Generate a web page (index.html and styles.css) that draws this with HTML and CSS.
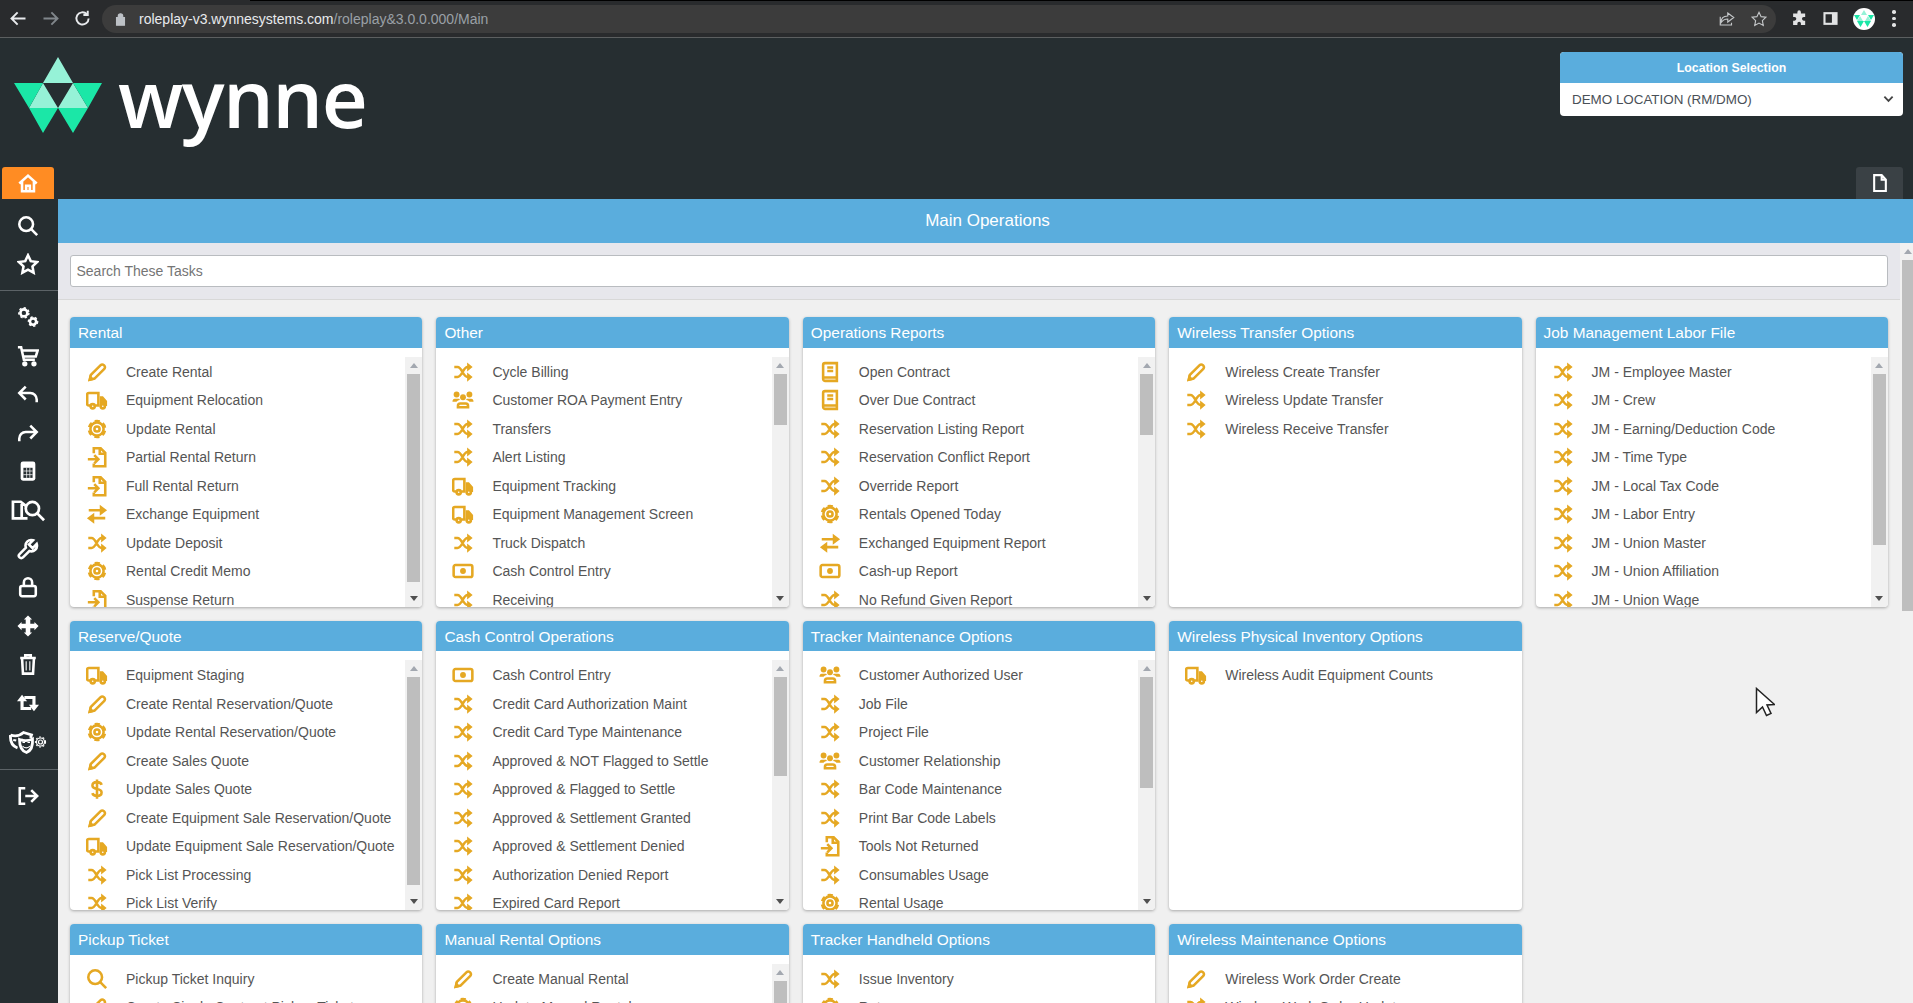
FILE: index.html
```html
<!DOCTYPE html>
<html lang="en">
<head>
  <meta charset="UTF-8">
  <title>Main Operations</title>
  <link rel="stylesheet" href="styles.css">
</head>
<body>
  <svg class="icon-defs" xmlns="http://www.w3.org/2000/svg">
    <symbol id="i-pencil" viewBox="0 0 24 24"><path d="M4 20.5l1.3-5.3L16 4.5a2.4 2.4 0 0 1 3.4 0l.6.6a2.4 2.4 0 0 1 0 3.4L9.300 19.200z"/><path class="solid" d="M2.500 22l1.500-7 5.500 5.500z"/></symbol>
    <symbol id="i-truck" viewBox="0 0 24 24"><path d="M4.500 18H3a1.700 1.700 0 0 1-1.700-1.700V6A1.700 1.700 0 0 1 3 4.300h10.500V18H10"/><path class="solid" d="M15 8h3.500l4.500 5v5.500h-2.500c-.5-3-4.500-3-5.500-.5z"/><circle cx="7.300" cy="18.800" r="2.300"/><circle cx="18.300" cy="18.800" r="2.300"/></symbol>
    <symbol id="i-cog" viewBox="0 0 24 24"><circle cx="12" cy="12" r="2.800"/><circle cx="12" cy="12" r="7.200"/><circle class="teeth" cx="12" cy="12" r="8.800"/></symbol>
    <symbol id="i-file" viewBox="0 0 24 24"><path d="M8.500 8V2.500h7.500l5 5V22H8.500v-3"/><path d="M15 2.500V8.500h6"/><path d="M2 14.500h11M9 10l4.500 4.500L9 19"/></symbol>
    <symbol id="i-exchange" viewBox="0 0 24 24"><path d="M3 8h14M21 16.500H7"/><path class="solid" d="M15 2l8 6-8 6zM9 10.500l-8 6 8 6z"/></symbol>
    <symbol id="i-shuffle" viewBox="0 0 24 24"><path d="M2.500 6.500H6c5 0 6 11 11 11h1M2.500 17.500H6c5 0 6-11 11-11h1"/><path class="solid" d="M16.500 1.500l6 5-6 5zM16.500 12.500l6 5-6 5z"/></symbol>
    <symbol id="i-dollar" viewBox="0 0 24 24"><path d="M17 7.500C16.500 5.500 14.500 4.500 12 4.500c-3 0-5 1.500-5 3.800s2 3.200 5 3.700 5 1.500 5 3.800-2 3.700-5 3.700c-2.500 0-4.500-1-5-3M12 1.500v21"/></symbol>
    <symbol id="i-users" viewBox="0 0 24 24"><circle class="solid" cx="5" cy="6" r="3.200"/><circle class="solid" cx="19" cy="6" r="3.200"/><circle class="solid" cx="12" cy="9" r="3.200"/><path class="solid" d="M.5 14c0-2.500 1-3.500 2.500-3.500h4c1 0 1.500.5 1.500 1.500-2 .5-3 1-3.500 2zM23.500 14c0-2.500-1-3.500-2.500-3.500h-4c-1 0-1.500.5-1.500 1.500 2 .5 3 1 3.500 2z"/><path d="M6.500 20v-1.500c0-1.500 1-2.700 2.500-2.700h6c1.500 0 2.500 1.200 2.500 2.700V20z"/></symbol>
    <symbol id="i-money" viewBox="0 0 24 24"><rect x="1.800" y="5.500" width="20.400" height="13" rx="2"/><circle class="solid" cx="12" cy="12" r="3.200"/></symbol>
    <symbol id="i-book" viewBox="0 0 24 24"><path d="M4.500 19.500V4.300a2 2 0 0 1 2-2h13v19.400h-13a2.200 2.200 0 0 1-2-2.200zM4.500 18h15M9 7h6.500M9 11h6.500"/></symbol>
    <symbol id="i-search" viewBox="0 0 24 24"><circle cx="10" cy="10" r="7.500"/><path d="M15.500 15.500l6.500 6.500"/></symbol>
    <symbol id="s-home" viewBox="0 0 24 24"><path d="M2.500 12.500L12 4l9.500 8.500M5.500 10.500V21h13V10.500M10 21v-6h4v6"/></symbol>
    <symbol id="s-star" viewBox="0 0 24 24"><path d="M12 2.500l3 6.400 6.900.9-5 4.800 1.200 6.900-6.100-3.300-6.100 3.300 1.200-6.900-5-4.800 6.900-.9z"/></symbol>
    <symbol id="s-cogs" viewBox="0 0 24 24"><circle cx="7.500" cy="7.500" r="3.800"/><circle class="teeth-sm" cx="7.500" cy="7.500" r="5.500"/><circle cx="17.500" cy="17" r="3.400"/><circle class="teeth-sm" cx="17.500" cy="17" r="5"/></symbol>
    <symbol id="s-cart" viewBox="0 0 24 24"><path d="M1 2.500h3.500L7.500 16h12M5.500 6h17l-2 6.500H7"/><circle cx="8.500" cy="20.500" r="1.500"/><circle cx="18.500" cy="20.500" r="1.500"/></symbol>
    <symbol id="s-undo" viewBox="0 0 24 24"><path d="M9.500 4l-7 7 7 7M3 11h11.500a7 7 0 0 1 7 7v3"/></symbol>
    <symbol id="s-redo" viewBox="0 0 24 24"><path d="M14.500 4l7 7-7 7M21 11H9.500a7 7 0 0 0-7 7v3"/></symbol>
    <symbol id="s-calc" viewBox="0 0 24 24"><rect class="solid" x="4" y="1.500" width="16" height="21" rx="2.500"/><rect class="dark" x="7" y="8.500" width="10" height="11"/><path class="dark-line" d="M7 12h10M7 16h10M10.500 8.500v11M14 8.500v11"/></symbol>
    <symbol id="s-booksearch" viewBox="0 0 36 24"><path d="M17 20.500H2V3.500h8l5 4M11 4v16.500"/><circle cx="22" cy="10.500" r="6.800"/><path d="M27 15.500l7 7"/></symbol>
    <symbol id="s-wrench" viewBox="0 0 24 24"><path d="M21.500 6.500L17 11l-4-4 4.500-4.500a6.200 6.200 0 0 0-7.800 8L2.800 17.500a2.500 2.500 0 0 0 3.700 3.700l7-7a6.200 6.200 0 0 0 8-7.700z"/></symbol>
    <symbol id="s-lock" viewBox="0 0 24 24"><rect x="3.500" y="11" width="17" height="11" rx="2"/><path d="M7.500 11V7a4.500 4.500 0 0 1 9 0v4"/></symbol>
    <symbol id="s-move" viewBox="0 0 24 24"><path class="solid" d="M12 .5l4.500 4.500H14.500V9.500H19V7.500l4.500 4.500-4.500 4.500V14.500H14.500V19h2L12 23.500 7.500 19h2V14.500H5v2L.5 12 5 7.500v2h4.500V5h-2z"/></symbol>
    <symbol id="s-trash" viewBox="0 0 24 24"><path d="M3.500 5.500h17M9 5V2.500h6V5M5.500 5.500l1 17h11l1-17"/><path class="thin" d="M10 9v10M14 9v10"/></symbol>
    <symbol id="s-retweet" viewBox="0 0 24 24"><path class="thick" d="M5.500 8v10h10M18.500 16V6H8"/><path class="solid" d="M0 10l5.500-7 5.500 7zM13 14l5.500 7 5.500-7z"/></symbol>
    <symbol id="s-masks" viewBox="0 0 38 24"><path d="M1.500 5c4 1.500 9 1 13-2.500l8 2.500-1 3"/><path d="M1.500 5c-.5 6 1.500 11 7 13"/><path class="solid" d="M4.500 9l3 .5-.5 2-3-.5zM11 9.500l2.500-1 .5 2-2.500 1z"/><path d="M10.500 9.500c4 1.500 9 1.500 13-.5.5 6.500-1 11.500-6 13.500-5-1.500-7-6.500-7-13z"/><path class="thin" d="M13.500 16c2 2.500 5.500 2.500 7.500 0M13.500 12.500h2.500M18.500 12.500h2.500"/><circle class="thin" cx="31.500" cy="12" r="2"/><circle class="thin" cx="31.500" cy="12" r="4"/><circle class="teeth-xs" cx="31.500" cy="12" r="5"/></symbol>
    <symbol id="s-signout" viewBox="0 0 24 24"><path d="M9 3.500H3v17h6M9 12h13M15.500 5.500L22 12l-6.500 6.500"/></symbol>
  </svg>

  <div class="browser-bar">
    <div class="nav-btns">
      <svg class="nav-ico" viewBox="0 0 24 24"><path d="M20 12H5M11 5l-7 7 7 7"/></svg>
      <svg class="nav-ico nav-off" viewBox="0 0 24 24"><path d="M4 12h15M13 5l7 7-7 7"/></svg>
      <svg class="nav-ico" viewBox="0 0 24 24"><path d="M19 12a7 7 0 1 1-2-5M18 3v5h-5"/></svg>
    </div>
    <div class="omnibox">
      <svg class="lock-ico" viewBox="0 0 12 16"><path d="M3.500 6V4.500a2.500 2.500 0 0 1 5 0V6M1.500 6.500h9V15h-9z"/></svg>
      <span class="url">roleplay-v3.wynnesystems.com<span class="url-path">/roleplay&amp;3.0.0.000/Main</span></span>
      <div class="omni-end">
        <svg class="omni-ico" viewBox="0 0 24 24"><path d="M13 4l8 6-8 6v-4c-4 0-7 2-9 5 0-5 3-9 9-9zM3 9v11h15v-3"/></svg>
        <svg class="omni-ico" viewBox="0 0 24 24"><path d="M12 3l2.800 5.900 6.400.8-4.700 4.500 1.200 6.400-5.700-3.100-5.700 3.100 1.200-6.400-4.700-4.500 6.400-.8z"/></svg>
      </div>
    </div>
    <div class="browser-tools">
      <svg class="tool-ico" viewBox="0 0 24 24"><path d="M9 3a2.500 2.500 0 0 1 5 0v2h6v5h-2a2.500 2.500 0 0 0 0 5h2v6h-6v-2a2.500 2.500 0 0 0-5 0v2H3v-6h2a2.500 2.500 0 0 0 0-5H3V5h6z"/></svg>
      <svg class="tool-ico panel-ico" viewBox="0 0 24 24"><rect x="2" y="3" width="20" height="18"/><rect class="panel-in" x="5" y="6" width="9" height="12"/></svg>
      <svg class="avatar" viewBox="0 0 22 22"><circle cx="11" cy="11" r="11" fill="#fff"/><path fill="#96f2d7" d="M11 2l3 5H8zM7 8l3 5H4zM15 8l3 5h-6z"/><path fill="#1be7a7" d="M1 7h6l-3 5zM15 7h6l-3 5zM4 13h7l-3.500 6zM11 13h7l-3.500 6z"/></svg>
      <div class="dots"><i></i><i></i><i></i></div>
    </div>
  </div>

  <header class="topbar">
    <div class="brand-row">
      <div class="logo">
        <svg class="logo-mark" viewBox="0 0 88 76">
          <path fill="#96f2d7" d="M44 0l15 26H29zM29 26l15 25H15zM59 26l15 25H44z"/>
          <path fill="#1be7a7" d="M0 26h29L15 51zM59 26h29L74 51zM15 51h29L29 76zM44 51h30L59 76z"/>
        </svg>
        <span class="logo-text">wynne</span>
      </div>
      <div class="location-box">
        <div class="location-head">Location Selection</div>
        <div class="location-select">
          <span>DEMO LOCATION (RM/DMO)</span>
          <svg class="chevron" viewBox="0 0 12 8"><path d="M1.500 1.500L6 6l4.500-4.500"/></svg>
        </div>
      </div>
    </div>
    <div class="tab-row">
      <div class="home-tab"><svg class="side-ico"><use href="#s-home"/></svg></div>
      <div class="file-tab"><svg class="file-ico" viewBox="0 0 24 24"><path d="M5 2.500h9l5 5.500v13.500H5zM14 2.500V8h5"/></svg></div>
    </div>
  </header>

  <div class="workspace">
    <nav class="sidebar">
      <div class="side-group">
        <div class="side-item"><svg class="side-ico"><use href="#i-search"/></svg></div>
        <div class="side-item"><svg class="side-ico"><use href="#s-star"/></svg></div>
      </div>
      <div class="side-group">
        <div class="side-item"><svg class="side-ico"><use href="#s-cogs"/></svg></div>
        <div class="side-item"><svg class="side-ico"><use href="#s-cart"/></svg></div>
        <div class="side-item"><svg class="side-ico"><use href="#s-undo"/></svg></div>
        <div class="side-item"><svg class="side-ico"><use href="#s-redo"/></svg></div>
        <div class="side-item"><svg class="side-ico"><use href="#s-calc"/></svg></div>
        <div class="side-item"><svg class="side-ico wide"><use href="#s-booksearch"/></svg></div>
        <div class="side-item"><svg class="side-ico"><use href="#s-wrench"/></svg></div>
        <div class="side-item"><svg class="side-ico"><use href="#s-lock"/></svg></div>
        <div class="side-item"><svg class="side-ico"><use href="#s-move"/></svg></div>
        <div class="side-item"><svg class="side-ico"><use href="#s-trash"/></svg></div>
        <div class="side-item"><svg class="side-ico"><use href="#s-retweet"/></svg></div>
        <div class="side-item"><svg class="side-ico wider"><use href="#s-masks"/></svg></div>
      </div>
      <div class="side-group">
        <div class="side-item"><svg class="side-ico"><use href="#s-signout"/></svg></div>
      </div>
    </nav>

    <main class="main">
      <div class="main-title">Main Operations</div>
      <div class="main-body">
        <div class="content">
          <div class="task-search"><input class="task-input" type="text" placeholder="Search These Tasks"></div>
          <div class="card-grid">

            <section class="card">
              <h3 class="card-head">Rental</h3>
              <div class="card-body">
                <ul class="task-list">
                  <li class="task"><svg class="ico"><use href="#i-pencil"/></svg>Create Rental</li>
                  <li class="task"><svg class="ico"><use href="#i-truck"/></svg>Equipment Relocation</li>
                  <li class="task"><svg class="ico"><use href="#i-cog"/></svg>Update Rental</li>
                  <li class="task"><svg class="ico"><use href="#i-file"/></svg>Partial Rental Return</li>
                  <li class="task"><svg class="ico"><use href="#i-file"/></svg>Full Rental Return</li>
                  <li class="task"><svg class="ico"><use href="#i-exchange"/></svg>Exchange Equipment</li>
                  <li class="task"><svg class="ico"><use href="#i-shuffle"/></svg>Update Deposit</li>
                  <li class="task"><svg class="ico"><use href="#i-cog"/></svg>Rental Credit Memo</li>
                  <li class="task"><svg class="ico"><use href="#i-file"/></svg>Suspense Return</li>
                </ul>
                <div class="scrollbar"><i class="arrow-up"></i><b class="thumb" style="height:208px"></b><i class="arrow-down"></i></div>
              </div>
            </section>

            <section class="card">
              <h3 class="card-head">Other</h3>
              <div class="card-body">
                <ul class="task-list">
                  <li class="task"><svg class="ico"><use href="#i-shuffle"/></svg>Cycle Billing</li>
                  <li class="task"><svg class="ico"><use href="#i-users"/></svg>Customer ROA Payment Entry</li>
                  <li class="task"><svg class="ico"><use href="#i-shuffle"/></svg>Transfers</li>
                  <li class="task"><svg class="ico"><use href="#i-shuffle"/></svg>Alert Listing</li>
                  <li class="task"><svg class="ico"><use href="#i-truck"/></svg>Equipment Tracking</li>
                  <li class="task"><svg class="ico"><use href="#i-truck"/></svg>Equipment Management Screen</li>
                  <li class="task"><svg class="ico"><use href="#i-shuffle"/></svg>Truck Dispatch</li>
                  <li class="task"><svg class="ico"><use href="#i-money"/></svg>Cash Control Entry</li>
                  <li class="task"><svg class="ico"><use href="#i-shuffle"/></svg>Receiving</li>
                </ul>
                <div class="scrollbar"><i class="arrow-up"></i><b class="thumb" style="height:51px"></b><i class="arrow-down"></i></div>
              </div>
            </section>

            <section class="card">
              <h3 class="card-head">Operations Reports</h3>
              <div class="card-body">
                <ul class="task-list">
                  <li class="task"><svg class="ico"><use href="#i-book"/></svg>Open Contract</li>
                  <li class="task"><svg class="ico"><use href="#i-book"/></svg>Over Due Contract</li>
                  <li class="task"><svg class="ico"><use href="#i-shuffle"/></svg>Reservation Listing Report</li>
                  <li class="task"><svg class="ico"><use href="#i-shuffle"/></svg>Reservation Conflict Report</li>
                  <li class="task"><svg class="ico"><use href="#i-shuffle"/></svg>Override Report</li>
                  <li class="task"><svg class="ico"><use href="#i-cog"/></svg>Rentals Opened Today</li>
                  <li class="task"><svg class="ico"><use href="#i-exchange"/></svg>Exchanged Equipment Report</li>
                  <li class="task"><svg class="ico"><use href="#i-money"/></svg>Cash-up Report</li>
                  <li class="task"><svg class="ico"><use href="#i-shuffle"/></svg>No Refund Given Report</li>
                </ul>
                <div class="scrollbar"><i class="arrow-up"></i><b class="thumb" style="height:61px"></b><i class="arrow-down"></i></div>
              </div>
            </section>

            <section class="card">
              <h3 class="card-head">Wireless Transfer Options</h3>
              <div class="card-body">
                <ul class="task-list">
                  <li class="task"><svg class="ico"><use href="#i-pencil"/></svg>Wireless Create Transfer</li>
                  <li class="task"><svg class="ico"><use href="#i-shuffle"/></svg>Wireless Update Transfer</li>
                  <li class="task"><svg class="ico"><use href="#i-shuffle"/></svg>Wireless Receive Transfer</li>
                </ul>
              </div>
            </section>

            <section class="card">
              <h3 class="card-head">Job Management Labor File</h3>
              <div class="card-body">
                <ul class="task-list">
                  <li class="task"><svg class="ico"><use href="#i-shuffle"/></svg>JM - Employee Master</li>
                  <li class="task"><svg class="ico"><use href="#i-shuffle"/></svg>JM - Crew</li>
                  <li class="task"><svg class="ico"><use href="#i-shuffle"/></svg>JM - Earning/Deduction Code</li>
                  <li class="task"><svg class="ico"><use href="#i-shuffle"/></svg>JM - Time Type</li>
                  <li class="task"><svg class="ico"><use href="#i-shuffle"/></svg>JM - Local Tax Code</li>
                  <li class="task"><svg class="ico"><use href="#i-shuffle"/></svg>JM - Labor Entry</li>
                  <li class="task"><svg class="ico"><use href="#i-shuffle"/></svg>JM - Union Master</li>
                  <li class="task"><svg class="ico"><use href="#i-shuffle"/></svg>JM - Union Affiliation</li>
                  <li class="task"><svg class="ico"><use href="#i-shuffle"/></svg>JM - Union Wage</li>
                </ul>
                <div class="scrollbar"><i class="arrow-up"></i><b class="thumb" style="height:171px"></b><i class="arrow-down"></i></div>
              </div>
            </section>

            <section class="card">
              <h3 class="card-head">Reserve/Quote</h3>
              <div class="card-body">
                <ul class="task-list">
                  <li class="task"><svg class="ico"><use href="#i-truck"/></svg>Equipment Staging</li>
                  <li class="task"><svg class="ico"><use href="#i-pencil"/></svg>Create Rental Reservation/Quote</li>
                  <li class="task"><svg class="ico"><use href="#i-cog"/></svg>Update Rental Reservation/Quote</li>
                  <li class="task"><svg class="ico"><use href="#i-pencil"/></svg>Create Sales Quote</li>
                  <li class="task"><svg class="ico"><use href="#i-dollar"/></svg>Update Sales Quote</li>
                  <li class="task"><svg class="ico"><use href="#i-pencil"/></svg>Create Equipment Sale Reservation/Quote</li>
                  <li class="task"><svg class="ico"><use href="#i-truck"/></svg>Update Equipment Sale Reservation/Quote</li>
                  <li class="task"><svg class="ico"><use href="#i-shuffle"/></svg>Pick List Processing</li>
                  <li class="task"><svg class="ico"><use href="#i-shuffle"/></svg>Pick List Verify</li>
                </ul>
                <div class="scrollbar"><i class="arrow-up"></i><b class="thumb" style="height:208px"></b><i class="arrow-down"></i></div>
              </div>
            </section>

            <section class="card">
              <h3 class="card-head">Cash Control Operations</h3>
              <div class="card-body">
                <ul class="task-list">
                  <li class="task"><svg class="ico"><use href="#i-money"/></svg>Cash Control Entry</li>
                  <li class="task"><svg class="ico"><use href="#i-shuffle"/></svg>Credit Card Authorization Maint</li>
                  <li class="task"><svg class="ico"><use href="#i-shuffle"/></svg>Credit Card Type Maintenance</li>
                  <li class="task"><svg class="ico"><use href="#i-shuffle"/></svg>Approved &amp; NOT Flagged to Settle</li>
                  <li class="task"><svg class="ico"><use href="#i-shuffle"/></svg>Approved &amp; Flagged to Settle</li>
                  <li class="task"><svg class="ico"><use href="#i-shuffle"/></svg>Approved &amp; Settlement Granted</li>
                  <li class="task"><svg class="ico"><use href="#i-shuffle"/></svg>Approved &amp; Settlement Denied</li>
                  <li class="task"><svg class="ico"><use href="#i-shuffle"/></svg>Authorization Denied Report</li>
                  <li class="task"><svg class="ico"><use href="#i-shuffle"/></svg>Expired Card Report</li>
                </ul>
                <div class="scrollbar"><i class="arrow-up"></i><b class="thumb" style="height:99px"></b><i class="arrow-down"></i></div>
              </div>
            </section>

            <section class="card">
              <h3 class="card-head">Tracker Maintenance Options</h3>
              <div class="card-body">
                <ul class="task-list">
                  <li class="task"><svg class="ico"><use href="#i-users"/></svg>Customer Authorized User</li>
                  <li class="task"><svg class="ico"><use href="#i-shuffle"/></svg>Job File</li>
                  <li class="task"><svg class="ico"><use href="#i-shuffle"/></svg>Project File</li>
                  <li class="task"><svg class="ico"><use href="#i-users"/></svg>Customer Relationship</li>
                  <li class="task"><svg class="ico"><use href="#i-shuffle"/></svg>Bar Code Maintenance</li>
                  <li class="task"><svg class="ico"><use href="#i-shuffle"/></svg>Print Bar Code Labels</li>
                  <li class="task"><svg class="ico"><use href="#i-file"/></svg>Tools Not Returned</li>
                  <li class="task"><svg class="ico"><use href="#i-shuffle"/></svg>Consumables Usage</li>
                  <li class="task"><svg class="ico"><use href="#i-cog"/></svg>Rental Usage</li>
                </ul>
                <div class="scrollbar"><i class="arrow-up"></i><b class="thumb" style="height:111px"></b><i class="arrow-down"></i></div>
              </div>
            </section>

            <section class="card">
              <h3 class="card-head">Wireless Physical Inventory Options</h3>
              <div class="card-body">
                <ul class="task-list">
                  <li class="task"><svg class="ico"><use href="#i-truck"/></svg>Wireless Audit Equipment Counts</li>
                </ul>
              </div>
            </section>

            <section class="card row-start">
              <h3 class="card-head">Pickup Ticket</h3>
              <div class="card-body">
                <ul class="task-list">
                  <li class="task"><svg class="ico"><use href="#i-search"/></svg>Pickup Ticket Inquiry</li>
                  <li class="task"><svg class="ico"><use href="#i-pencil"/></svg>Create Single Contract Pickup Ticket</li>
                </ul>
              </div>
            </section>

            <section class="card">
              <h3 class="card-head">Manual Rental Options</h3>
              <div class="card-body">
                <ul class="task-list">
                  <li class="task"><svg class="ico"><use href="#i-pencil"/></svg>Create Manual Rental</li>
                  <li class="task"><svg class="ico"><use href="#i-cog"/></svg>Update Manual Rental</li>
                </ul>
                <div class="scrollbar"><i class="arrow-up"></i><b class="thumb" style="height:120px"></b><i class="arrow-down"></i></div>
              </div>
            </section>

            <section class="card">
              <h3 class="card-head">Tracker Handheld Options</h3>
              <div class="card-body">
                <ul class="task-list">
                  <li class="task"><svg class="ico"><use href="#i-shuffle"/></svg>Issue Inventory</li>
                  <li class="task"><svg class="ico"><use href="#i-cog"/></svg>Returns</li>
                </ul>
              </div>
            </section>

            <section class="card">
              <h3 class="card-head">Wireless Maintenance Options</h3>
              <div class="card-body">
                <ul class="task-list">
                  <li class="task"><svg class="ico"><use href="#i-pencil"/></svg>Wireless Work Order Create</li>
                  <li class="task"><svg class="ico"><use href="#i-shuffle"/></svg>Wireless Work Order Update</li>
                </ul>
              </div>
            </section>

          </div>
        </div>
        <div class="page-scroll"><i class="page-arrow"></i><b class="page-thumb"></b></div>
      </div>
    </main>
  </div>

  <svg class="cursor" viewBox="0 0 20 30"><path d="M1.500 1.500v24l6-5.500 4 8.500 4.500-2-4-8.500 7.500-.5z"/></svg>
</body>
</html>
```

FILE: styles.css
```css
* {
  box-sizing: border-box;
}

html, body {
  margin: 0;
  height: 1003px;
  overflow: hidden;
}

body {
  position: relative;
  background: #262e31;
  font-family: "Liberation Sans", Arial, sans-serif;
  font-size: 14px;
  color: #555;
}

.icon-defs {
  position: absolute;
  width: 0;
  height: 0;
}

/* browser chrome */
.browser-bar {
  display: flex;
  align-items: center;
  height: 38px;
  background: linear-gradient(to right, transparent 250px, #000 250px) top / 100% 1px no-repeat, #292b2d;
  border-bottom: 1px solid #5c5f60;
  padding: 0 0 0 5px;
}

.nav-btns {
  display: flex;
  gap: 11px;
  margin-right: 9px;
  margin-left: 3px;
}

.nav-ico {
  width: 21px;
  height: 21px;
  fill: none;
  stroke: #e8eaed;
  stroke-width: 2.200;
}

.nav-off {
  stroke: #80868b;
}

.omnibox {
  flex: 1;
  display: flex;
  align-items: center;
  height: 28px;
  background: #3c3c3c;
  border-radius: 14px;
  padding-left: 13px;
}

.lock-ico {
  width: 11px;
  height: 14px;
  fill: #bdc1c6;
  stroke: #bdc1c6;
  stroke-width: 1.400;
  margin-right: 13px;
}

.url {
  font-size: 14px;
  color: #e8eaed;
}

.url-path {
  color: #9aa0a6;
}

.omni-end {
  margin-left: auto;
  display: flex;
  gap: 14px;
  padding-right: 8px;
}

.omni-ico {
  width: 18px;
  height: 18px;
  fill: none;
  stroke: #c4c7c9;
  stroke-width: 1.500;
}

.browser-tools {
  display: flex;
  align-items: center;
  width: 137px;
  padding-left: 15px;
  gap: 14px;
}

.tool-ico {
  width: 17px;
  height: 17px;
  fill: #e2e3e4;
}

.panel-in {
  fill: #292b2d;
}

.avatar {
  width: 22px;
  height: 22px;
}

.dots {
  display: flex;
  flex-direction: column;
  gap: 3px;
  margin-left: 3px;
}

.dots i {
  width: 3.500px;
  height: 3.500px;
  border-radius: 50%;
  background: #e2e3e4;
}

/* header */
.topbar {
  height: 161px;
}

.brand-row {
  display: flex;
  justify-content: space-between;
  align-items: flex-start;
  height: 129px;
  padding: 14px 10px 0 14px;
}

.logo {
  display: flex;
  gap: 16px;
  margin-top: 5px;
}

.logo-mark {
  width: 88px;
  height: 76px;
}

.logo-text {
  font-family: "Open Sans", sans-serif;
  font-weight: 600;
  font-size: 80px;
  line-height: 80px;
  letter-spacing: -1.500px;
  color: #fff;
}

.location-box {
  width: 343px;
  border-radius: 4px;
  overflow: hidden;
  background: #fff;
}

.location-head {
  height: 31px;
  line-height: 32px;
  background: #5aaddd;
  color: #fff;
  text-align: center;
  font-size: 12.300px;
  font-weight: bold;
}

.location-select {
  display: flex;
  align-items: center;
  justify-content: space-between;
  height: 33px;
  padding: 0 9px 1px 12px;
  font-size: 13.400px;
  color: #495057;
}

.chevron {
  width: 11px;
  height: 8px;
  fill: none;
  stroke: #444;
  stroke-width: 2;
}

.tab-row {
  display: flex;
  justify-content: space-between;
  height: 32px;
  padding: 0 10px 0 2px;
}

.home-tab {
  display: flex;
  align-items: center;
  justify-content: center;
  width: 52px;
  padding-right: 1px;
  background: #ff8c23;
  border-radius: 3px 3px 0 0;
}

.file-tab {
  display: flex;
  align-items: center;
  justify-content: center;
  width: 47px;
  background: #3a4145;
  border-radius: 3px 3px 0 0;
}

.file-ico {
  width: 20px;
  height: 20px;
  fill: none;
  stroke: #fff;
  stroke-width: 2.500;
}

/* left nav */
.workspace {
  display: flex;
  height: 804px;
}

.sidebar {
  flex: 0 0 58px;
  padding-top: 7.500px;
}

.side-group {
  padding-bottom: 6.500px;
  margin-bottom: 6.500px;
  border-bottom: 1px solid #5c6367;
}

.side-group:nth-child(2) {
  padding-bottom: 8px;
}

.side-group:last-child {
  border-bottom: 0;
}

.side-item {
  display: flex;
  align-items: center;
  justify-content: center;
  height: 38.600px;
  padding-right: 2px;
}

.side-ico {
  width: 22px;
  height: 22px;
  fill: none;
  stroke: #fff;
  stroke-width: 2.800;
  color: #fff;
  overflow: visible;
}

.side-ico.wide {
  width: 35px;
  height: 24px;
}

.side-ico.wider {
  width: 38px;
  height: 24px;
}

.solid {
  fill: currentColor;
  stroke: none;
}

.dark {
  fill: #262e31;
  stroke: none;
}

.dark-line {
  stroke: #fff;
  stroke-width: 0.800;
}

.thin {
  stroke-width: 1.200;
}

.thick {
  stroke-width: 3.400;
}

.teeth {
  stroke-width: 2.800;
  stroke-dasharray: 5.500 3.720;
  stroke-dashoffset: 7.350;
}

.teeth-sm {
  stroke-width: 1.600;
  stroke-dasharray: 2.500 2.500;
}

.teeth-xs {
  stroke-width: 1.200;
  stroke-dasharray: 1.800 1.800;
}

/* main area */
.main {
  flex: 1;
  min-width: 0;
  display: flex;
  flex-direction: column;
  background: #f0f0f0;
}

.main-title {
  flex: 0 0 44px;
  line-height: 44px;
  background: #5aaddd;
  color: #fff;
  font-size: 17px;
  text-align: center;
  padding-left: 4px;
}

.main-body {
  flex: 1;
  display: flex;
  min-height: 0;
}

.content {
  flex: 1;
  min-width: 0;
  overflow: hidden;
}

.task-search {
  height: 57px;
  padding: 12px;
  background: #e7e7ec;
  border-bottom: 1px solid #d8d8d8;
}

.task-input {
  display: block;
  width: 100%;
  height: 32px;
  padding: 0 5.500px;
  border: 1px solid #b9bcc0;
  border-radius: 3px;
  background: #fff;
  font-family: inherit;
  font-size: 14px;
}

.task-input::placeholder {
  color: #757575;
}

.card-grid {
  display: grid;
  grid-template-columns: repeat(5, 1fr);
  grid-auto-rows: 289.500px;
  gap: 14px;
  padding: 17px 12px 0;
}

.card {
  display: flex;
  flex-direction: column;
  min-width: 0;
  background: #fff;
  border-radius: 4px;
  overflow: hidden;
  box-shadow: 0 1px 3px rgba(0, 0, 0, 0.3);
}

.row-start {
  grid-column: 1;
}

.card-head {
  flex: 0 0 30.500px;
  margin: 0;
  padding: 1px 8px 0;
  line-height: 29.500px;
  background: #5aaddd;
  color: #fff;
  font-size: 15.400px;
  font-weight: normal;
}

.card-body {
  flex: 1;
  display: flex;
  min-height: 0;
  padding-top: 9px;
}

.task-list {
  flex: 1;
  min-width: 0;
  margin: 0;
  padding: 1px 0 0;
  list-style: none;
  overflow: hidden;
}

.task {
  display: flex;
  align-items: center;
  gap: 18px;
  height: 28.500px;
  padding-left: 16px;
  white-space: nowrap;
}

.ico {
  flex: 0 0 22px;
  width: 22px;
  height: 22px;
  fill: none;
  stroke: #e5a823;
  stroke-width: 2.800;
  color: #e5a823;
}

.scrollbar {
  flex: 0 0 17px;
  display: flex;
  flex-direction: column;
  align-items: center;
  background: #f1f1f1;
  padding-top: 6px;
  position: relative;
}

.arrow-up {
  width: 0;
  height: 0;
  border: 4px solid transparent;
  border-top: 0;
  border-bottom: 5px solid #a3a8b0;
  margin-bottom: 6px;
}

.arrow-down {
  width: 0;
  height: 0;
  border: 4px solid transparent;
  border-bottom: 0;
  border-top: 5px solid #505050;
  position: absolute;
  bottom: 6px;
}

.thumb {
  display: block;
  width: 13px;
  background: #bebebe;
}

.page-scroll {
  flex: 0 0 13px;
  display: flex;
  flex-direction: column;
  align-items: center;
  padding-left: 2px;
  padding-top: 6px;
  background: #f1f1f1;
}

.page-arrow {
  width: 0;
  height: 0;
  border: 4px solid transparent;
  border-top: 0;
  border-bottom: 5px solid #a3a8b0;
  margin-bottom: 6px;
}

.page-thumb {
  display: block;
  width: 100%;
  height: 351px;
  background: #bebebe;
}

.cursor {
  position: absolute;
  left: 1755px;
  top: 687px;
  width: 20px;
  height: 30px;
  fill: #fff;
  stroke: #222;
  stroke-width: 1.500;
}
```
